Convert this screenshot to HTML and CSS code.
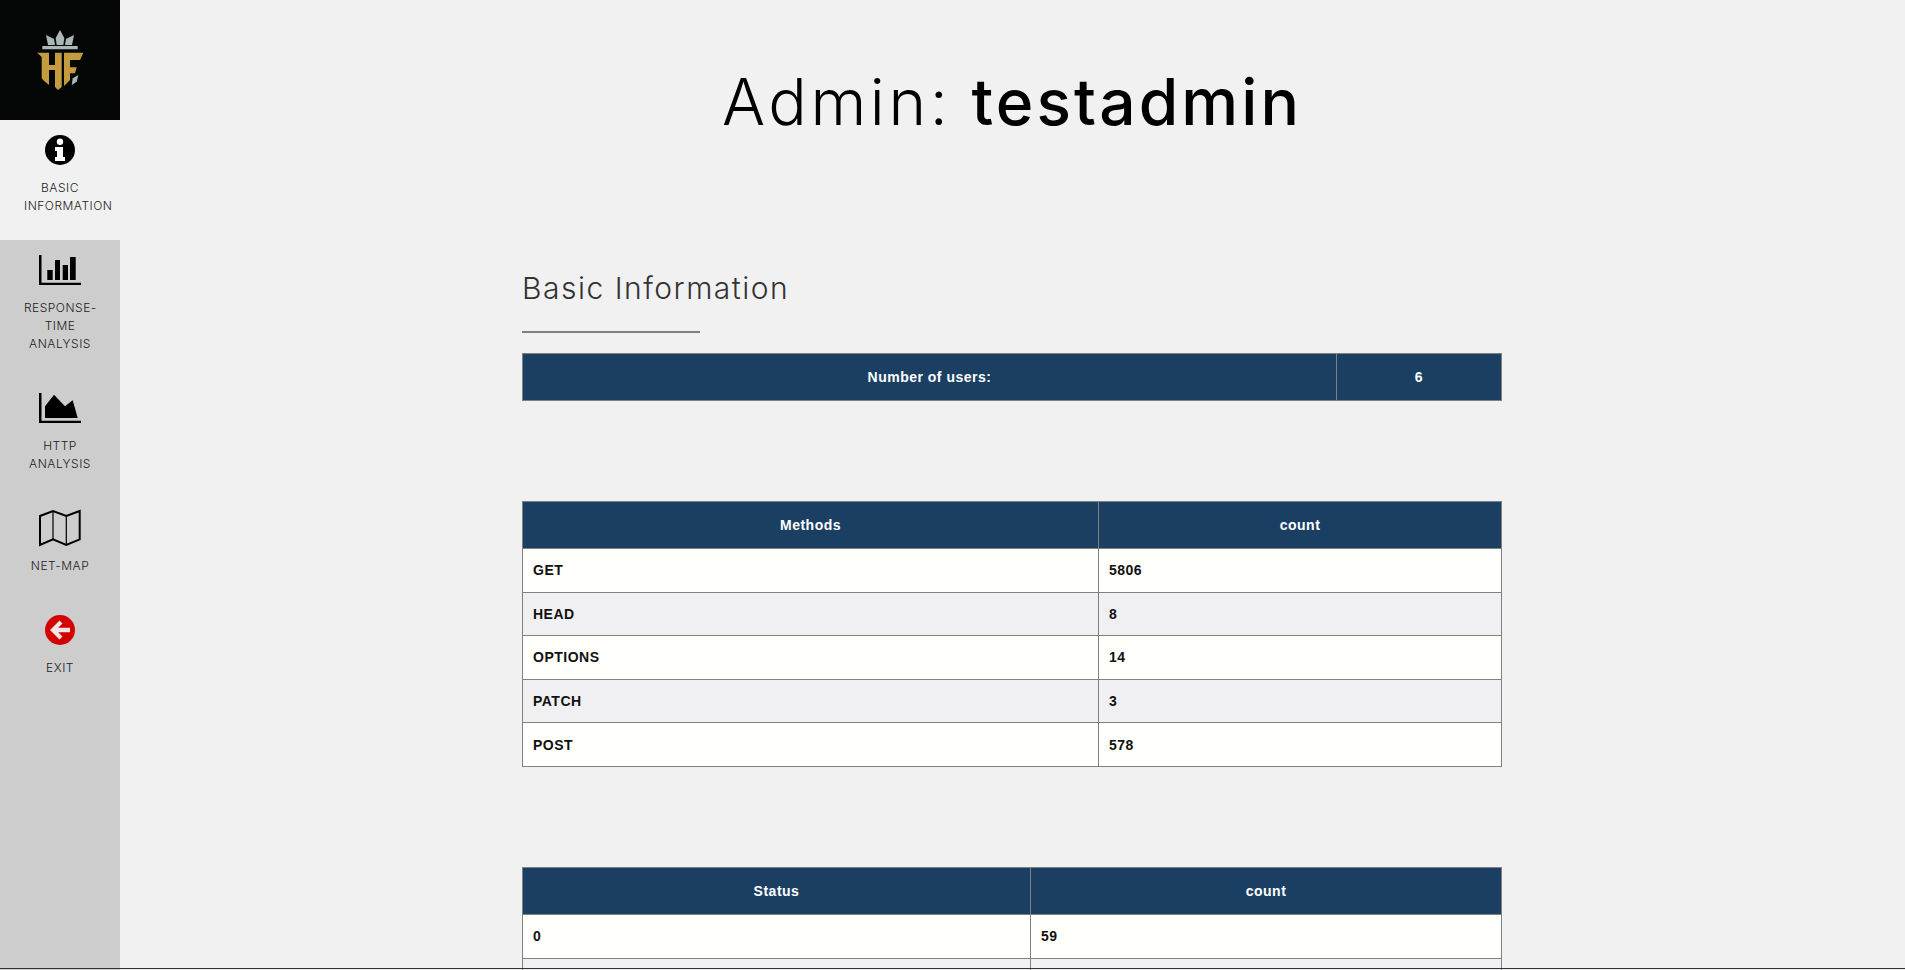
FILE: index.html
```html
<!DOCTYPE html>
<html lang="en">
<head>
<meta charset="utf-8">
<title>Admin: testadmin</title>
<link rel="stylesheet" href="styles.css">
</head>
<body>
<div class="app">
  <nav class="sidebar">
    <div class="logo">
      <svg viewBox="0 0 120 120" width="120" height="120">
        <path fill="#a9b8b6" d="M60 30l4.300 8-1 7h-6.600l-1-7zM46 35l8 4 1 6h-7zM74 35l-8 4-1 6h7zM42.300 46h35.400v3.300H42.300z"/>
        <path fill="#c49c3e" d="M37.300 52.700H49V65h6V52.700h6.700V87L58 90l-3-3V70h-6v15l-6-5-1.300-2V57zM64 52.700h19.300L80 60H70v7.300h6.700L75 73.300h-5V80l-6 6z"/>
        <path fill="#a9b8b6" d="M78.300 75l-1.600 6.700-5 3.300 1-6.700z"/>
      </svg>
    </div>
    <a class="item active">
      <svg class="ico" viewBox="0 0 30 30" width="42" height="30">
        <circle cx="15" cy="15" r="15" fill="#000"/>
        <circle cx="15" cy="6.800" r="3.200" fill="#fff"/>
        <path fill="#fff" d="M10 12h8v10h2v4H10v-4h2v-6h-2z"/>
      </svg>
      <span class="label">BASIC INFORMATION</span>
    </a>
    <a class="item">
      <svg class="ico" viewBox="0 0 42 30" width="42" height="30">
        <path fill="#000" d="M0 0h2.500v27.700H42V30H0zM8.300 15h5.400v10H8.300zM16 5h5v20h-5zM23.700 10H29v15h-5.300zM31 2h5.700v23H31z"/>
      </svg>
      <span class="label">RESPONSE-TIME ANALYSIS</span>
    </a>
    <a class="item">
      <svg class="ico" viewBox="0 0 42 30" width="42" height="30">
        <path fill="#000" d="M0 0h2.500v27.700H42V30H0zM6 25V13.300L15 1.700l11 11.600 7.700-6L38.700 25z"/>
      </svg>
      <span class="label">HTTP ANALYSIS</span>
    </a>
    <a class="item">
      <svg class="ico map" viewBox="0 0 42 36" width="42" height="36">
        <path fill="none" stroke="#000" stroke-width="2" d="M1 6l13-5 13.300 5L40.700 1v28.300L27.300 35 14 29.300 1 35z"/>
        <path fill="none" stroke="#000" stroke-width="1.200" d="M14 1v28.300M27.300 6v29"/>
      </svg>
      <span class="label">NET-MAP</span>
    </a>
    <a class="item">
      <svg class="ico" viewBox="0 0 30 30" width="42" height="30">
        <circle cx="15" cy="15" r="15" fill="#d40000"/>
        <path fill="#f2e6e6" d="M14.500 5.500l3 3-4.300 4.200H25v4.600H13.200l4.300 4.200-3 3L5 15z"/>
      </svg>
      <span class="label">EXIT</span>
    </a>
  </nav>
  <main class="main">
    <h1 class="title"><span class="title-light">Admin:</span> testadmin</h1>
    <section class="section">
      <h2 class="section-title">Basic Information</h2>
      <div class="rule"></div>
      <table class="data t-users">
        <tr><th class="c1">Number of users:</th><th>6</th></tr>
      </table>
      <table class="data t-methods">
        <tr><th class="c1">Methods</th><th>count</th></tr>
        <tr><td>GET</td><td>5806</td></tr>
        <tr><td>HEAD</td><td>8</td></tr>
        <tr><td>OPTIONS</td><td>14</td></tr>
        <tr><td>PATCH</td><td>3</td></tr>
        <tr><td>POST</td><td>578</td></tr>
      </table>
      <table class="data t-status">
        <tr><th class="c1">Status</th><th>count</th></tr>
        <tr><td>0</td><td>59</td></tr>
        <tr><td>&nbsp;</td><td>&nbsp;</td></tr>
      </table>
    </section>
  </main>
</div>
<div class="window-edge"></div>
</body>
</html>
```
FILE: styles.css
```css
html, body {
  margin: 0;
  height: 970px;
  overflow: hidden;
  background: #f1f1f2;
}
.app {
  display: flex;
  height: 970px;
}
.sidebar {
  width: 120px;
  flex: none;
  background: #cdcdcd;
  display: flex;
  flex-direction: column;
}
.logo {
  height: 120px;
  background: #050707;
}
.logo svg { display: block; }
.item {
  display: flex;
  flex-direction: column;
  align-items: center;
  padding: 15px 0 25px;
  color: #222;
}
.item.active { background: #f1f1f1; }
.ico {
  display: block;
  height: 30px;
  margin-bottom: 14px;
  overflow: visible;
}
.map { margin-top: -3px; margin-bottom: 11px; height: 36px; }
.label {
  width: 72px;
  font: 300 12px/18px "Inter", "Noto Sans", sans-serif;
  letter-spacing: 0.5px;
  text-align: center;
}
.main {
  flex: 1;
  min-width: 0;
  padding-right: 1px;
}
.title {
  margin: 62px 0 0;
  font: 500 64px/80px "Inter", sans-serif;
  letter-spacing: 3.1px;
  text-align: center;
  color: #000;
}
.title-light { font-weight: 300; letter-spacing: 3.6px; }
.section {
  width: 980px;
  margin: 0 auto;
}
.section-title {
  margin: 126px 0 0;
  font: 300 30px/40px "Inter", sans-serif;
  letter-spacing: 1.5px;
  color: #333;
}
.rule {
  width: 178px;
  height: 2px;
  margin-top: 23px;
  background: #808080;
}
.data {
  width: 980px;
  table-layout: fixed;
  border-collapse: collapse;
  font: 700 14px/18px "Liberation Sans", Arial, sans-serif;
  letter-spacing: 0.5px;
}
.data th, .data td { border: 1px solid #808080; }
.data th {
  height: 46px;
  padding: 0 10px;
  background: #1a3f63;
  color: #fff;
  text-align: center;
}
.data td {
  height: 42.6px;
  padding: 0 10px;
  color: #111;
  background: #fffffb;
}
.data tr:nth-child(odd) td { background: #f0f0f3; }
.t-users { margin-top: 20px; }
.t-users .c1 { width: 793px; }
.t-methods { margin-top: 100px; }
.t-methods .c1 { width: 555px; }
.t-status { margin-top: 100px; }
.t-status .c1 { width: 487px; }
.window-edge {
  position: fixed;
  left: 0;
  right: 0;
  bottom: 1px;
  height: 1px;
  background: #333;
}
```
